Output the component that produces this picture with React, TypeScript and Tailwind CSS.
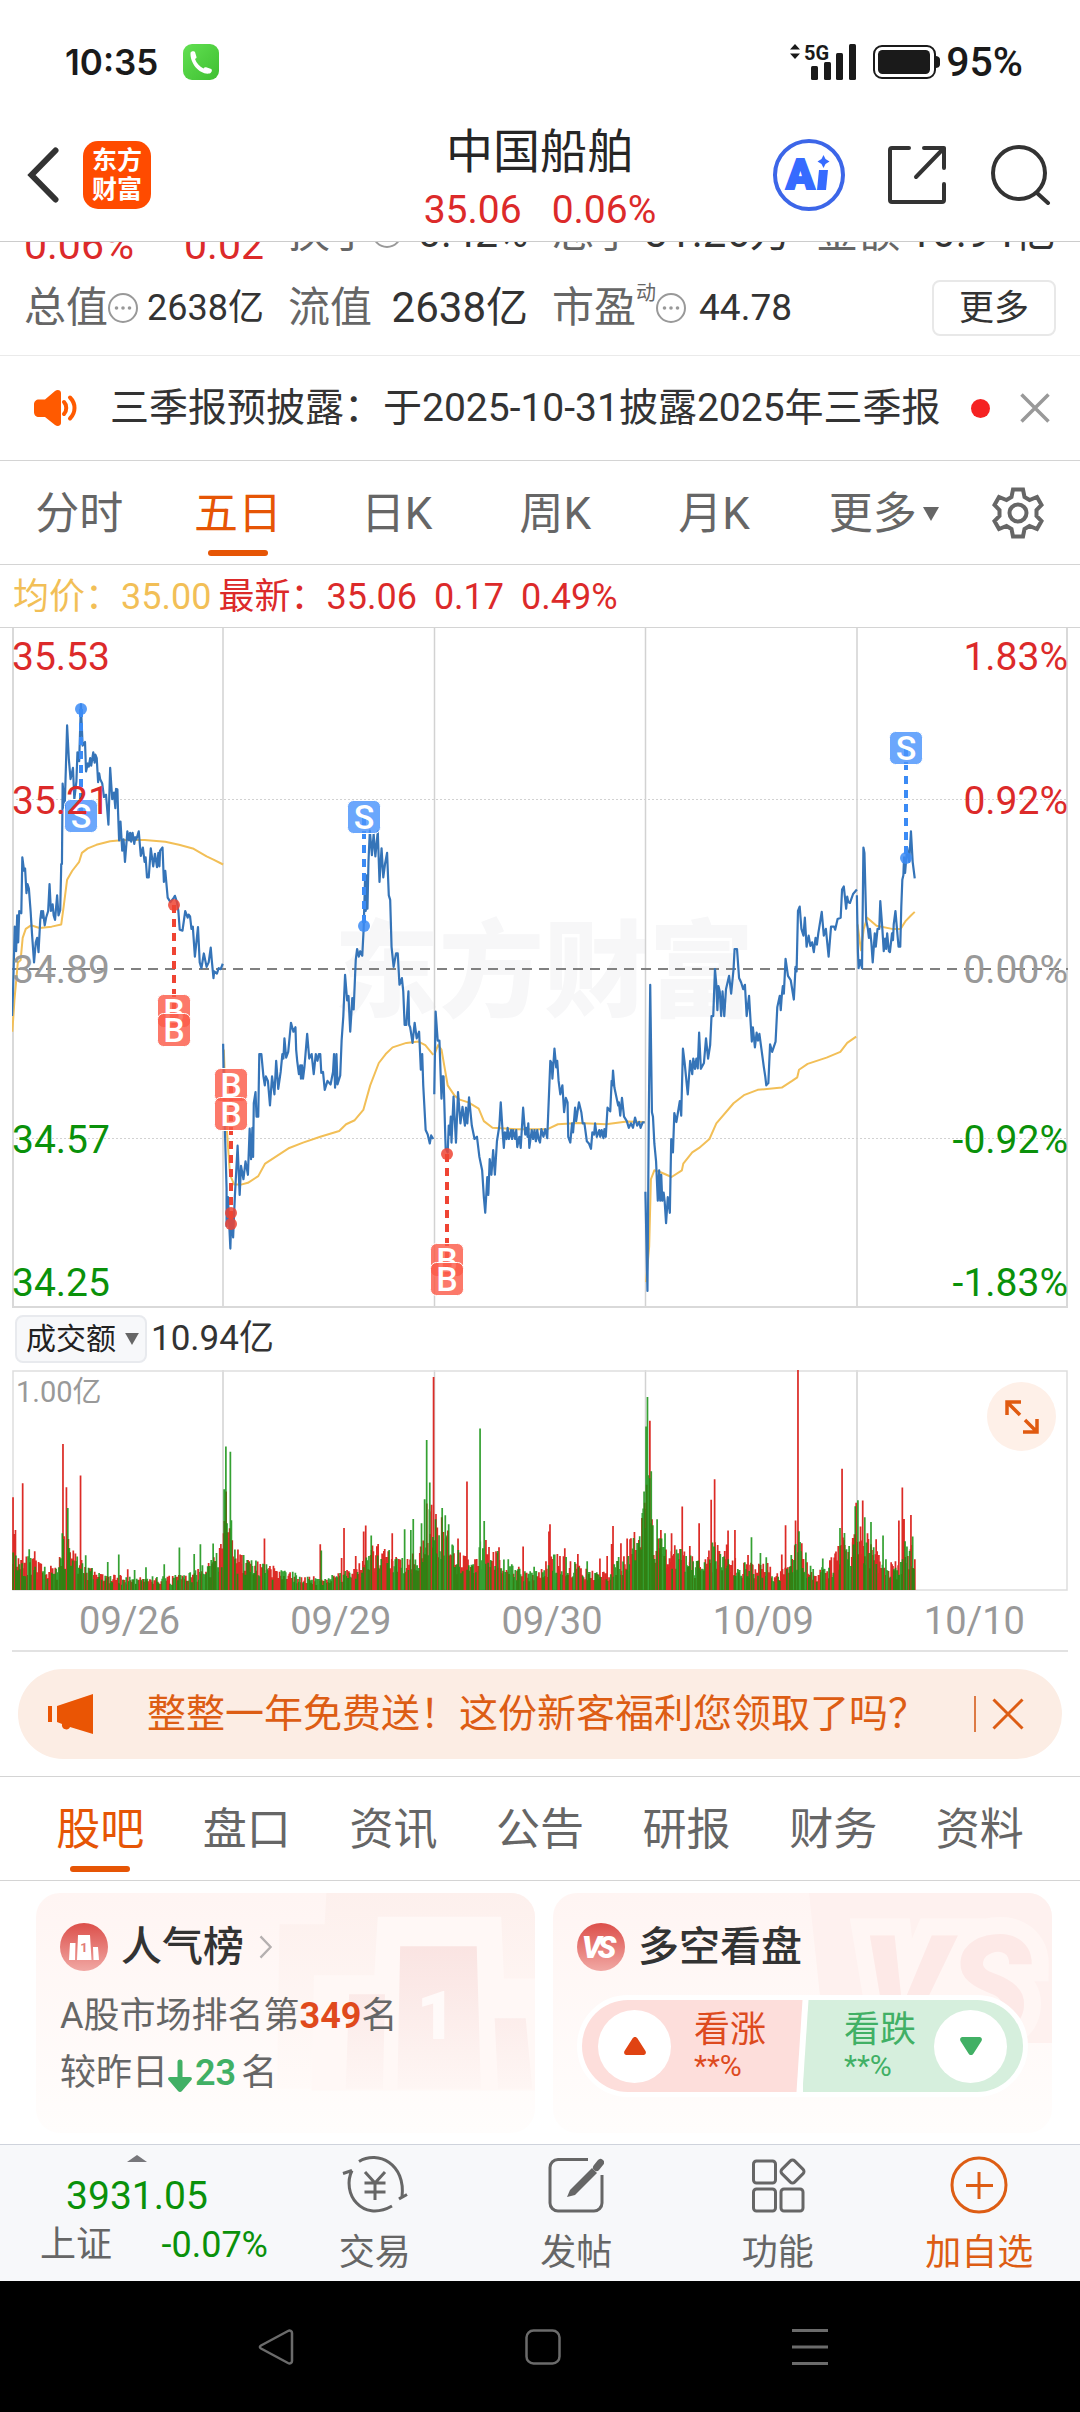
import { useState } from "react";
import { clsx } from "clsx";

const CHART_TABS = ["分时", "五日", "日K", "周K", "月K", "更多"];
const INFO_TABS = ["股吧", "盘口", "资讯", "公告", "研报", "财务", "资料"];
const DATES = ["09/26", "09/29", "09/30", "10/09", "10/10"];

// one line per trading day, plot grid 35..3101 x 17..1538
const PRICE_LINES = [
  "35,885 38,830 43,685 47,740 50,660 53,720 56,650 62,655 65,530 70,560 73,555 77,610 80,590 84,600 89,650 93,700 99,765 104,720 108,710 112,742 117,670 120,650 123,665 125,650 130,682 134,665 140,650 144,590 148,650 153,635 156,660 160,670 166,615 170,660 175,648 178,545 180,545 182,365 188,420 195,235 200,310 205,355 212,330 216,400 222,360 225,295 230,315 235,188 240,280 247,272 250,338 255,320 258,327 262,308 265,325 271,295 275,318 277,300 281,308 285,362 288,342 291,355 297,365 302,395 308,390 315,457 320,330 326,400 331,385 335,420 337,377 341,378 343,430 346,492 350,450 355,515 359,490 363,540 370,472 375,492 378,475 381,495 385,475 390,500 393,485 396,490 403,472 409,527 415,508 420,540 423,530 427,575 432,575 438,510 445,550 450,522 456,552 460,520 463,550 465,515 472,508 476,585 480,560 487,620 495,630 505,620 508,616 514,630 518,650 522,692 530,694 538,650 545,665 548,658 552,662 556,690 560,685 566,752 575,686 580,765 585,778 592,745 600,775 606,765 612,732 615,760 620,800 622,785 630,790 635,778 641,780 647,768",
  "648,947 652,1110 658,1270 658,1355 662,1290 669,1405 672,1330 677,1380 682,1290 690,1175 696,1285 700,1220 707,1250 713,1210 720,1240 725,1137 729,1205 733,1135 735,1200 737,1080 742,1055 745,1110 750,1110 753,970 759,970 765,1020 769,1040 772,1020 778,1030 784,1085 790,1020 797,1060 802,985 808,1048 815,1010 820,970 823,980 826,935 831,978 837,965 845,900 852,920 858,910 860,960 863,985 868,1015 872,995 874,1025 877,995 880,1025 884,1000 892,925 898,980 905,970 911,1015 917,970 922,985 926,970 930,970 933,1012 938,1010 943,1050 951,1030 960,1038 967,1010 970,970 973,1045 977,970 980,1038 988,1018 992,940 997,885 1002,793 1008,850 1012,840 1017,920 1023,845 1027,870 1033,760 1037,735 1042,752 1046,740 1052,750 1056,690 1060,580 1062,650 1065,570 1067,645 1070,540 1074,470 1080,525 1085,478 1090,528 1097,472 1102,585 1108,510 1113,575 1118,545 1124,520 1129,615 1133,625 1137,730 1143,775 1150,745 1155,745 1160,815 1167,800 1171,830 1175,905 1180,905 1186,830 1188,905 1191,910 1198,945 1204,900 1210,935 1217,920 1222,1005 1226,970 1229,1040 1236,1140 1242,1150 1248,1170 1252,1152 1258,1160",
  "1261,1060 1265,875 1271,940 1276,940 1282,1070 1285,1020 1288,1020 1290,1075 1294,1180 1300,1190 1303,1130 1306,1150 1309,1110 1311,1168 1317,1065 1324,1168 1330,1055 1337,1125 1343,1088 1350,1130 1353,1090 1357,1125 1362,1067 1370,1130 1378,1160 1385,1155 1392,1200 1400,1230 1405,1290 1409,1325 1415,1245 1418,1285 1422,1205 1427,1240 1432,1185 1437,1240 1443,1165 1450,1130 1454,1078 1460,1150 1463,1180 1466,1145 1471,1160 1474,1135 1478,1160 1484,1140 1487,1160 1490,1140 1496,1160 1499,1140 1502,1178 1508,1155 1512,1180 1519,1090 1525,1150 1528,1135 1532,1155 1534,1125 1537,1180 1544,1140 1548,1160 1552,1140 1556,1165 1560,1140 1564,1160 1568,1168 1572,1138 1578,1155 1583,1138 1589,1158 1598,985 1602,990 1604,1025 1610,958 1615,1000 1618,985 1622,1030 1627,1060 1633,1040 1638,1100 1643,1068 1648,1078 1650,1155 1656,1168 1661,1125 1664,1145 1670,1090 1673,1120 1681,1078 1688,1100 1692,1125 1697,1125 1704,1165 1710,1170 1716,1182 1720,1145 1725,1150 1728,1125 1733,1155 1740,1140 1743,1155 1747,1140 1752,1158 1755,1138 1759,1155 1764,1090 1772,1098 1776,1030 1778,1040 1780,1007 1784,1045 1795,1085 1797,1078 1801,1108 1806,1068 1812,1110 1820,1120 1826,1135 1832,1125 1838,1135 1844,1112 1850,1130 1856,1122 1860,1135 1866,1123 1872,1123",
  "1874,1278 1880,1500 1884,1100 1888,815 1893,1100 1896,1110 1900,1170 1905,1210 1910,1298 1914,1230 1917,1298 1920,1240 1923,1298 1927,1280 1930,1300 1934,1348 1939,1290 1945,1325 1949,1160 1954,1190 1958,1102 1964,1122 1974,1075 1978,1108 1983,958 1988,990 1997,1060 2004,985 2010,1015 2013,980 2018,1003 2022,980 2026,1002 2030,922 2035,1003 2044,990 2050,935 2056,980 2062,950 2066,885 2071,885 2076,780 2080,815 2083,872 2086,818 2090,830 2094,885 2098,830 2103,885 2108,825 2117,795 2123,835 2130,780 2133,735 2140,735 2146,800 2152,810 2158,825 2163,815 2168,885 2175,840 2180,905 2183,942 2186,910 2192,955 2197,922 2201,940 2205,925 2212,965 2218,1000 2222,1020 2225,1040 2231,1035 2236,948 2242,965 2252,942 2257,865 2264,840 2267,872 2270,840 2273,818 2276,835 2281,757 2288,795 2296,805 2305,848 2310,775 2313,785 2317,650 2322,640 2327,690 2333,705 2337,665 2342,730 2348,705 2353,728 2358,720 2363,742 2368,710 2372,725 2376,700 2386,652 2392,705 2398,690 2406,752 2413,685 2422,685 2425,692 2432,668 2441,665 2445,602 2450,595 2457,645 2460,618 2463,630 2468,632 2477,612 2488,602",
  "2488,615 2491,740 2493,778 2497,760 2503,778 2507,508 2510,520 2515,670 2520,690 2523,710 2526,690 2530,720 2534,765 2540,700 2543,730 2548,690 2553,690 2556,628 2562,690 2566,740 2570,712 2573,735 2576,700 2581,740 2584,742 2590,700 2593,715 2595,680 2600,650 2605,695 2609,730 2614,730 2617,640 2620,580 2623,570 2625,530 2628,565 2634,508 2640,540 2645,472 2650,540 2656,577",
];

const AVERAGE_LINES = [
  "36,920 42,850 52,765 60,760 66,710 75,690 90,682 115,688 150,685 178,680 185,640 195,580 210,560 230,540 238,520 255,510 280,502 320,494 360,491 420,491 480,495 520,502 560,510 600,528 620,535 648,546",
  "650,960 658,1130 668,1240 680,1262 700,1262 720,1258 750,1243 770,1215 800,1200 840,1180 880,1168 930,1155 985,1142 1005,1127 1030,1118 1055,1095 1075,1040 1100,990 1120,970 1140,955 1180,945 1215,942 1235,950 1258,972",
  "1262,970 1272,950 1282,960 1300,1040 1320,1063 1335,1072 1360,1078 1390,1092 1405,1120 1430,1135 1500,1138 1590,1138 1620,1127 1680,1124 1760,1127 1820,1121 1872,1122",
  "1876,1480 1885,1400 1890,1250 1900,1230 1920,1235 1950,1245 1980,1230 1984,1215 2010,1190 2030,1180 2060,1160 2080,1125 2130,1080 2160,1062 2200,1050 2270,1045 2300,1030 2315,1022 2320,1005 2345,992 2400,978 2440,965 2460,945 2486,931",
  "2490,680 2500,738 2508,690 2518,665 2545,683 2590,690 2615,690 2630,672 2645,660 2656,652",
];

interface Trade {
  side: "S" | "B";
  x: number;
  dots: number[];
  badges: number[];
}

const TRADES: Trade[] = [
  { side: "S", x: 69, dots: [81], badges: [188] },
  { side: "S", x: 352, dots: [298], badges: [189] },
  { side: "S", x: 894, dots: [230], badges: [120] },
  { side: "B", x: 162, dots: [277], badges: [383, 402] },
  { side: "B", x: 219, dots: [585, 596], badges: [457, 486] },
  { side: "B", x: 435, dots: [526], badges: [632, 651] },
];

// typical bar height along the time axis
const VOLUME_LEVELS: [number, number][] = [
  [35, 200], [50, 120], [80, 95], [120, 75], [170, 60], [180, 170], [205, 130], [250, 75], [300, 44],
  [400, 38], [500, 40], [560, 50], [620, 90], [645, 140], [650, 300], [672, 220], [690, 110], [740, 85], [800, 65],
  [880, 42], [940, 35], [990, 55], [1040, 70], [1080, 125], [1150, 100], [1215, 120], [1240, 240],
  [1262, 220], [1290, 220], [1320, 125], [1360, 90], [1400, 145], [1460, 95], [1520, 55], [1568, 55],
  [1600, 110], [1660, 85], [1700, 58], [1770, 55], [1820, 125], [1862, 200], [1880, 360], [1895, 230],
  [1930, 120], [1980, 125], [2040, 70], [2075, 145], [2110, 100], [2150, 80], [2230, 75], [2250, 40],
  [2290, 90], [2320, 160], [2340, 90], [2370, 50], [2420, 90], [2450, 150], [2470, 125], [2488, 270],
  [2505, 200], [2525, 140], [2560, 115], [2600, 65], [2625, 95], [2645, 150], [2658, 100],
];

const VOLUME_PEAKS: [number, number, "r" | "g"][] = [
  [38, 278, "r"], [45, 180, "r"], [66, 320, "r"], [85, 122, "g"], [101, 116, "r"], [117, 80, "r"],
  [183, 437, "r"], [193, 308, "r"], [197, 246, "g"], [213, 118, "r"], [234, 343, "r"], [249, 104, "g"],
  [313, 84, "g"], [345, 106, "g"], [371, 62, "r"], [391, 60, "g"], [424, 68, "g"], [477, 77, "g"],
  [521, 127, "g"], [564, 108, "g"], [582, 137, "g"], [619, 139, "g"], [638, 126, "r"], [651, 302, "g"],
  [656, 430, "g"], [669, 414, "g"], [691, 121, "r"], [724, 86, "r"], [768, 154, "r"], [930, 137, "r"],
  [933, 118, "g"], [999, 186, "r"], [992, 96, "r"], [1033, 102, "r"], [1056, 175, "r"], [1062, 193, "r"],
  [1078, 163, "g"], [1098, 138, "r"], [1130, 120, "g"], [1139, 170, "r"], [1175, 182, "g"], [1193, 180, "g"],
  [1200, 213, "g"], [1224, 200, "g"], [1233, 272, "g"], [1239, 449, "g"], [1248, 322, "g"], [1253, 255, "r"],
  [1259, 638, "r"], [1266, 228, "r"], [1284, 246, "g"], [1293, 224, "g"], [1330, 154, "r"], [1356, 325, "r"],
  [1394, 484, "g"], [1406, 207, "g"], [1411, 150, "r"], [1449, 128, "r"], [1519, 130, "r"], [1551, 70, "g"],
  [1594, 175, "r"], [1597, 197, "r"], [1640, 125, "r"], [1678, 108, "r"], [1705, 86, "g"], [1742, 94, "r"],
  [1763, 102, "r"], [1776, 138, "r"], [1780, 192, "r"], [1803, 140, "r"], [1821, 154, "r"], [1864, 216, "r"],
  [1872, 261, "r"], [1876, 490, "g"], [1880, 578, "g"], [1887, 507, "r"], [1891, 356, "g"], [1908, 212, "g"],
  [1919, 180, "r"], [1931, 170, "g"], [1950, 170, "r"], [1981, 250, "r"], [2003, 132, "r"], [2030, 200, "r"],
  [2065, 270, "r"], [2075, 332, "r"], [2110, 136, "r"], [2114, 178, "r"], [2134, 180, "r"], [2172, 105, "r"],
  [2182, 158, "g"], [2208, 111, "g"], [2225, 98, "g"], [2270, 106, "r"], [2281, 194, "r"], [2310, 208, "r"],
  [2317, 660, "r"], [2320, 176, "g"], [2340, 112, "g"], [2389, 94, "g"], [2414, 98, "r"], [2434, 132, "r"],
  [2439, 186, "g"], [2445, 363, "r"], [2452, 171, "g"], [2476, 156, "r"], [2486, 261, "r"], [2491, 254, "g"],
  [2505, 268, "r"], [2511, 218, "g"], [2529, 204, "g"], [2544, 152, "r"], [2564, 163, "g"], [2600, 86, "r"],
  [2610, 208, "r"], [2620, 307, "r"], [2625, 213, "r"], [2628, 146, "g"], [2645, 225, "r"], [2650, 160, "g"],
];

function buildVolumeBars() {
  const paths = { r: "", g: "" };
  let seed = 11;
  const random = () => {
    seed = (seed * 16807) % 2147483647;
    return seed / 2147483647;
  };
  let level = 0;
  for (let x = 36; x < 2658; x += 2.544) {
    while (level < VOLUME_LEVELS.length - 2 && VOLUME_LEVELS[level + 1][0] < x) level++;
    const [x0, h0] = VOLUME_LEVELS[level];
    const [x1, h1] = VOLUME_LEVELS[level + 1];
    const base = h0 + ((h1 - h0) * (x - x0)) / (x1 - x0);
    const height = base * (0.4 + 0.7 * random());
    paths[random() > 0.4 ? "r" : "g"] += `M${x.toFixed(1)} 659V${(659 - height).toFixed(0)}`;
  }
  VOLUME_PEAKS.forEach(([x, h, side]) => {
    paths[side] += `M${x} 659V${659 - h}`;
  });
  return paths;
}

const volumeBars = buildVolumeBars();

function MoreDots() {
  return (
    <svg viewBox="0 0 30 30" className="size-[30px] shrink-0" aria-hidden="true">
      <circle cx="15" cy="15" r="14" fill="none" stroke="#999" strokeWidth="2" />
      <circle cx="8.5" cy="15" r="1.8" fill="#999" />
      <circle cx="15" cy="15" r="1.8" fill="#999" />
      <circle cx="21.5" cy="15" r="1.8" fill="#999" />
    </svg>
  );
}

function StatusBar() {
  return (
    <div className="flex h-[120px] items-center justify-between pt-1 pr-[57px] pl-[65px] text-[#1a1a1a]">
      <div className="flex items-center gap-[25px]">
        <span className="font-['Inter','Roboto',sans-serif] text-[35px] leading-[40px] font-semibold">10:35</span>
        <svg viewBox="0 0 36 36" className="size-9" aria-hidden="true">
          <defs>
            <linearGradient id="call" x1="0" y1="0" x2="1" y2="1">
              <stop offset="0" stopColor="#62e052" />
              <stop offset="1" stopColor="#3fbf31" />
            </linearGradient>
          </defs>
          <rect width="36" height="36" rx="9" fill="url(#call)" />
          <path d="M7.500 9c0-2 4-2.500 4.500-1l1.500 5c.2 1-.5 1.500-1.500 2 1.500 4 4.500 7.500 8.500 9.500.800-1 1.500-1.500 2.700-1.200l5 1.700c1.500 1 .3 4-1.700 4.500C17 31 7 20 7.500 9z" fill="#fff" />
        </svg>
      </div>
      <div className="flex items-center">
        <svg viewBox="0 0 67 38" className="mr-[16px] h-[38px] w-[67px]" aria-hidden="true" fill="#1a1a1a">
          <path d="M0 6.500L5 1l5 5.500zM0 10.500h10L5 16z" />
          <text x="14" y="17" fontSize="20" fontWeight="700">5G</text>
          <rect x="21" y="23" width="7" height="14" rx="1.500" />
          <rect x="34" y="19" width="7" height="18" rx="1.500" />
          <rect x="46" y="10" width="7" height="27" rx="1.500" />
          <rect x="59" y="1" width="7" height="36" rx="1.500" />
        </svg>
        <svg viewBox="0 0 67 34" className="mr-[6px] h-[34px] w-[67px]" aria-hidden="true">
          <rect x="1" y="1" width="61" height="32" rx="8" fill="none" stroke="#1a1a1a" strokeWidth="2" />
          <rect x="5" y="5" width="52" height="24" rx="4.500" fill="#1a1a1a" />
          <path d="M62 11c3 0 5 1 5 4v4c0 3-2 4-5 4z" fill="#1a1a1a" />
        </svg>
        <span className="text-[41px] leading-[44px] font-medium">95%</span>
      </div>
    </div>
  );
}

function Header() {
  return (
    <header className="grid h-[122px] grid-cols-[1fr_auto_1fr] border-b border-[#ccc]">
      <div className="flex items-center gap-6 pb-3 pl-[27px]">
        <button type="button" aria-label="返回">
          <svg viewBox="0 0 32 56" className="h-14 w-8" fill="none" stroke="#333" strokeWidth="6" strokeLinecap="round" strokeLinejoin="miter">
            <path d="M28.500 3.500L4.500 28l24 24.500" />
          </svg>
        </button>
        <a href="#home" className="flex size-[68px] flex-col items-center justify-center rounded-[15px] bg-[#ff4b00] text-[25px] leading-[29px] font-bold text-white">
          <span>东方</span>
          <span>财富</span>
        </a>
      </div>
      <div className="flex flex-col items-center">
        <h1 className="text-[47px] leading-[64px] text-[#262626]">中国船舶</h1>
        <p className="flex gap-[30px] text-[39px] leading-[52px] text-[#dc2a2a]">
          <span>35.06</span>
          <span>0.06%</span>
        </p>
      </div>
      <div className="flex items-center justify-end pr-[29px] pb-3">
        <button type="button" aria-label="AI" className="mr-[41px]">
          <svg viewBox="0 0 74 74" className="size-[74px]">
            <circle cx="37" cy="37" r="34" fill="none" stroke="#3c66e8" strokeWidth="4" />
            <text x="14" y="51" fontSize="42" fontWeight="900" fill="#366bff" stroke="#366bff" strokeWidth="2">A</text>
            <path d="M47 32h9l-2 20h-9z" fill="#366bff" />
            <path d="M51.500 17l2 4 4 2.500-4 2.500-2 4-2-4-4-2.500 4-2.500z" fill="#366bff" />
          </svg>
        </button>
        <button type="button" aria-label="分享" className="mr-[44px]">
          <svg viewBox="0 0 60 60" className="size-[60px]" fill="none" stroke="#333" strokeWidth="4" strokeLinecap="round" strokeLinejoin="round">
            <path d="M22 3H5a2 2 0 0 0-2 2v50a2 2 0 0 0 2 2h50a2 2 0 0 0 2-2V39" />
            <path d="M37 3h20v20M57 3L29 32" />
          </svg>
        </button>
        <button type="button" aria-label="搜索">
          <svg viewBox="0 0 60 60" className="size-[60px]" fill="none" stroke="#333" strokeWidth="4" strokeLinecap="round">
            <circle cx="28" cy="28" r="26" />
            <path d="M46 48l11 10" />
          </svg>
        </button>
      </div>
    </header>
  );
}

function Stats() {
  return (
    <section className="flex h-[114px] flex-col justify-end overflow-hidden border-b border-[#eaeaea] px-6 pb-[17px] text-[#333]">
      <div className="grid shrink-0 grid-cols-4 items-end gap-x-6 text-[42px] leading-[74px] whitespace-nowrap">
        <div className="flex justify-between text-[41px] leading-[66px] text-[#dc2a2a]">
          <span>0.06%</span>
          <span>0.02</span>
        </div>
        <div className="flex items-center justify-between pb-2">
          <span className="flex items-center text-[#666]">换手<MoreDots /></span>
          <span className="text-[41px]">0.42%</span>
        </div>
        <div className="flex justify-between pb-2">
          <span className="text-[#666]">总手</span>
          <span>31.26万</span>
        </div>
        <div className="flex justify-between pb-2">
          <span className="text-[#666]">金额</span>
          <span>10.94亿</span>
        </div>
      </div>
      <div className="grid shrink-0 grid-cols-4 items-center gap-x-6 text-[42px] leading-[60px] whitespace-nowrap">
        <div className="flex items-center justify-between">
          <span className="flex items-center text-[#666]">总值<MoreDots /></span>
          <span className="text-[36px]">2638亿</span>
        </div>
        <div className="flex justify-between">
          <span className="text-[#666]">流值</span>
          <span>2638亿</span>
        </div>
        <div className="flex items-center justify-between">
          <span className="flex items-center text-[#666]">
            市盈<span className="self-start text-[20px] leading-[30px]">动</span><MoreDots />
          </span>
          <span className="text-[37px]">44.78</span>
        </div>
        <div className="flex justify-end">
          <button type="button" className="h-14 w-[124px] rounded-lg border-2 border-[#e8e8e8] text-[35px] leading-none">更多</button>
        </div>
      </div>
    </section>
  );
}

function Notice({ onClose }: { onClose: () => void }) {
  return (
    <div className="flex h-[105px] items-center border-b border-[#d4d4d4] pr-[30px] pl-[34px]">
      <svg viewBox="0 0 44 36" className="h-9 w-11 shrink-0" aria-hidden="true">
        <path d="M5 9.500h6L21 1c3-2 6-.5 6 2v30c0 2.500-3 4-6 2L11 27H5c-3 0-5-2-5-5v-7.500c0-3 2-5 5-5z" fill="#ff5a00" />
        <path d="M30 12c3 3 3 9 0 12M36 7.500c6 6 6 15 0 21" fill="none" stroke="#ff5a00" strokeWidth="4" strokeLinecap="round" />
      </svg>
      <a href="#notice" className="min-w-0 flex-1 overflow-hidden pl-8 text-[39px] leading-[56px] whitespace-nowrap text-[#333]">
        三季报预披露：于2025-10-31披露2025年三季报
      </a>
      <span className="mx-[30px] size-[19px] shrink-0 rounded-full bg-[#f52222]" />
      <button type="button" aria-label="关闭" onClick={onClose}>
        <svg viewBox="0 0 30 30" className="size-[30px]" stroke="#999" strokeWidth="3.500">
          <path d="M1.500 1.500l27 27M28.500 1.500l-27 27" />
        </svg>
      </button>
    </div>
  );
}

interface TabProps {
  label: string;
  active: boolean;
  onSelect: () => void;
}

function Tab({ label, active, onSelect }: TabProps) {
  return (
    <button
      type="button"
      role="tab"
      aria-selected={active}
      onClick={onSelect}
      className={clsx("relative flex h-full flex-1 items-center justify-center pt-[3px] text-[44px] leading-[56px]", active ? "text-[#e65505]" : "text-[#666]")}
    >
      {label}
      {label === "更多" && (
        <svg viewBox="0 0 16 14" className="absolute right-[13px] h-[14px] w-[16px]" fill="#666">
          <path d="M0 0h16L8 14z" />
        </svg>
      )}
      {active && <span className="absolute bottom-2 h-[6px] w-[60px] rounded-full bg-[#e65505]" />}
    </button>
  );
}

function TradeMarker({ side, x, dots, badges }: Trade) {
  const color = side === "S" ? "#3b8bf5" : "#ef4433";
  const from = Math.min(...dots, ...badges);
  const to = Math.max(...dots, ...badges);
  return (
    <g>
      <line x1={x} x2={x} y1={from} y2={to} stroke={color} strokeWidth="4" strokeDasharray="8 6" />
      {dots.map((y) => (
        <circle key={y} cx={x} cy={y} r="6" fill={color} opacity="0.85" />
      ))}
      {badges.map((y) => (
        <g key={y}>
          <rect x={x - 16.5} y={y - 16.5} width="33" height="33" rx="6" fill={side === "S" ? "#4a94fb" : "#fb5c49"} fillOpacity="0.82" stroke="#fff" strokeWidth="1" />
          <text x={x} y={y + 12} textAnchor="middle" fontSize="34" fontWeight="500" fill="#fff">{side}</text>
        </g>
      ))}
    </g>
  );
}

function PriceChart() {
  return (
    <div className="relative mx-3 text-[39px] leading-[40px]">
      <svg viewBox="0 0 1056 680" className="block w-full" role="img" aria-label="五日走势">
        <text x="532" y="380" textAnchor="middle" fontSize="105" fontWeight="900" fill="#f7f7f8">东方财富</text>
        <g stroke="#d2d2d2" strokeWidth="1.500">
          <path d="M211 0V680M422.500 0V680M633.500 0V680M845 0V680" />
          <path d="M0 171.500H1056M0 510.500H1056" strokeWidth="1" strokeDasharray="2 2" />
        </g>
        <path d="M1 0V679H1055V0" fill="none" stroke="#d9d9d9" strokeWidth="2" />
        <path d="M0 341H1056" stroke="#808080" strokeWidth="2" strokeDasharray="10 7" />
        <svg viewBox="35 17 3066 1521" width="1056" height="680" preserveAspectRatio="none" fill="none" strokeLinejoin="round">
          {AVERAGE_LINES.map((points) => (
            <polyline key={points} points={points} stroke="#f2bf57" strokeWidth="2" vectorEffect="non-scaling-stroke" />
          ))}
          {PRICE_LINES.map((points) => (
            <polyline key={points} points={points} stroke="#3574b8" strokeWidth="2.200" vectorEffect="non-scaling-stroke" />
          ))}
        </svg>
        {TRADES.map((trade) => (
          <TradeMarker key={trade.x} {...trade} />
        ))}
      </svg>
      <div className="absolute inset-0 flex justify-between">
        <div className="flex flex-col">
          <span className="pt-[9px] text-[#dc2a2a]">35.53</span>
          <span className="pt-[104px] text-[#dc2a2a]">35.21</span>
          <span className="pt-[129px] text-[#999]">34.89</span>
          <span className="pt-[130px] text-[#0a910a]">34.57</span>
          <span className="pt-[103px] text-[#0a910a]">34.25</span>
        </div>
        <div className="flex flex-col items-end">
          <span className="pt-[9px] text-[#dc2a2a]">1.83%</span>
          <span className="pt-[104px] text-[#dc2a2a]">0.92%</span>
          <span className="pt-[129px] text-[#999]">0.00%</span>
          <span className="pt-[130px] text-[#0a910a]">-0.92%</span>
          <span className="pt-[103px] text-[#0a910a]">-1.83%</span>
        </div>
      </div>
    </div>
  );
}

function VolumeChart() {
  return (
    <section>
      <div className="flex h-[62px] items-center gap-1 pl-[15px] text-[#333]">
        <button type="button" className="flex h-12 w-[132px] items-center justify-center gap-2 rounded-lg border-2 border-[#e8eaee] bg-[#f7f8fa] pl-1 text-[30px] leading-none text-[#222]">
          成交额
          <svg viewBox="0 0 16 14" className="h-3 w-4" fill="#666">
            <path d="M0 0h16L8 14z" />
          </svg>
        </button>
        <span className="text-[35px] leading-[48px]">10.94亿</span>
      </div>
      <div className="relative mx-3">
        <svg viewBox="0 0 1056 221" className="block w-full" role="img" aria-label="成交额">
          <path d="M211 0V220M422.500 0V220M633.500 0V220M845 0V220" stroke="#d2d2d2" strokeWidth="1.500" />
          <path d="M1 1H1055V220H1Z" fill="none" stroke="#dedede" strokeWidth="1.500" />
          <svg viewBox="35 0 3066 659" width="1056" height="220" preserveAspectRatio="none">
            <path d={volumeBars.r} stroke="#dc2b26" strokeWidth="5" />
            <path d={volumeBars.g} stroke="#12900f" strokeWidth="5" strokeOpacity="0.85" />
          </svg>
        </svg>
        <span className="absolute top-0 left-1 text-[29px] leading-[44px] text-[#999]">1.00亿</span>
        <button type="button" aria-label="全屏" className="absolute top-3 right-3 flex size-[69px] items-center justify-center rounded-full bg-[#fef0e8]">
          <svg viewBox="0 0 34 34" className="size-[34px]" fill="none" stroke="#e05a10" strokeWidth="3.500">
            <path d="M2 15V2h14M2 2l13 13M32 19v13H18M32 32L20 20" />
          </svg>
        </button>
      </div>
      <div className="flex h-[59px] items-center pl-6 text-[38px] leading-[56px] text-[#999]">
        {DATES.map((date) => (
          <span key={date} className="flex-1 text-center">{date}</span>
        ))}
      </div>
      <div className="mx-3 h-[2px] bg-[#e2e2e2]" />
    </section>
  );
}

function PromoBanner({ onClose }: { onClose: () => void }) {
  return (
    <div className="mx-[18px] my-[17px] flex h-[90px] items-center rounded-full bg-[#fcede4] pr-[38px] pl-[30px] text-[#dd5d14]">
      <svg viewBox="0 0 45 40" className="h-10 w-[45px] shrink-0" aria-hidden="true" fill="#ea5504">
        <path d="M0 12h4v16H0zM9 12L45 0v40L22 33c-1 4-9 3-8-3l-5-2z" />
      </svg>
      <a href="#promo" className="flex-1 pl-[54px] text-[39px] leading-[56px] whitespace-nowrap">
        整整一年免费送！这份新客福利您领取了吗？
      </a>
      <span className="mr-[16px] h-9 w-[2px] bg-[#dd7a44]" />
      <button type="button" aria-label="关闭" onClick={onClose}>
        <svg viewBox="0 0 32 32" className="size-8" stroke="#dd5d14" strokeWidth="3">
          <path d="M1.500 1.500l29 29M30.500 1.500l-29 29" />
        </svg>
      </button>
    </div>
  );
}

function RankCard() {
  return (
    <article className="relative h-60 overflow-hidden rounded-3xl bg-linear-to-b from-[#fff5f3] to-[#fffdfc] pt-[26px] pl-6">
      <svg viewBox="106 38 1447 707" preserveAspectRatio="none" className="absolute inset-0 size-full" aria-hidden="true">
        <defs>
          <linearGradient id="halo" x1="0" y1="0" x2="0" y2="1">
            <stop offset="0" stopColor="#fdf0ed" />
            <stop offset="1" stopColor="#fffaf8" />
          </linearGradient>
          <linearGradient id="podium" x1="0" y1="0" x2="0" y2="1">
            <stop offset="0" stopColor="#fae4e2" />
            <stop offset="1" stopColor="#fef6f4" />
          </linearGradient>
        </defs>
        <path d="M948 38L943 130H812L805 615H1553V38z" fill="url(#halo)" />
        <path d="M1097 108L1087 280H912L905 620H1553V290H1463L1455 108z" fill="#fff8f6" />
        <path d="M1162 195H1384L1396 615H1154zM1014 336H1118L1112 615H1004zM1436 407H1526L1545 615H1446z" fill="url(#podium)" />
        <text x="1210" y="468" fontSize="195" fontWeight="900" fill="#fffaf9">1</text>
      </svg>
      <div className="relative flex flex-col">
        <h2 className="flex h-14 items-center text-[41px] leading-[56px] font-medium text-[#333]">
          <svg viewBox="0 0 48 48" className="mr-[13px] size-12" aria-hidden="true">
            <defs>
              <linearGradient id="badge" x1="0" y1="0" x2="0" y2="1">
                <stop offset="0" stopColor="#dc4f4a" />
                <stop offset="1" stopColor="#f1a8a4" />
              </linearGradient>
            </defs>
            <circle cx="24" cy="24" r="24" fill="url(#badge)" />
            <path d="M18 12h12l1.500 25H17zM10 20h5.500L15 37H9zM33 24h5l1 13h-5.500z" fill="#fff" />
            <text x="24" y="29" textAnchor="middle" fontSize="13" fontWeight="700" fill="#e27c78">1</text>
          </svg>
          人气榜
          <svg viewBox="0 0 14 26" className="ml-[15px] h-6 w-[14px]" fill="none" stroke="#b5b0b0" strokeWidth="2.500">
            <path d="M1 1.500L12 13 1 24.500" />
          </svg>
        </h2>
        <p className="mt-[13px] text-[36px] leading-[57px] text-[#666]">
          A股市场排名第<b className="text-[#e04a1c]">349</b>名
        </p>
        <p className="flex items-center text-[36px] leading-[57px] text-[#666]">
          较昨日
          <svg viewBox="0 0 24 34" className="mt-1 h-[34px] w-6" fill="#41b065">
            <path d="M9.500 3a2.500 2.500 0 0 1 5 0v15H22c2 0 2.500 2 1 3.500L14 32c-1 1.300-3 1.300-4 0L1 21.500C-.5 20 0 18 2 18h7.500z" />
          </svg>
          <b className="ml-[3px] font-semibold text-[#41b065]">23</b>
          <span className="ml-[5px]">名</span>
        </p>
      </div>
    </article>
  );
}

function VoteCard() {
  return (
    <article className="relative h-60 overflow-hidden rounded-3xl bg-linear-to-b from-[#fff5f3] to-[#fffdfc] pt-[26px] pr-6 pl-6">
      <svg viewBox="0 0 499 240" preserveAspectRatio="none" className="absolute inset-0 size-full" aria-hidden="true">
        <path d="M256 0H499V150H272z" fill="#fef1ef" />
        <text x="308" y="140" fontSize="136" fontWeight="900" fontStyle="italic" fill="#fde9e7" stroke="#fff6f4" strokeWidth="34" paintOrder="stroke">VS</text>
      </svg>
      <div className="relative">
        <h2 className="flex h-14 items-center text-[41px] leading-[56px] font-medium text-[#333]">
          <svg viewBox="0 0 48 48" className="mr-[13px] size-12" aria-hidden="true">
            <circle cx="24" cy="24" r="24" fill="url(#badge)" />
            <text x="22" y="35" textAnchor="middle" fontSize="31" fontWeight="900" fontStyle="italic" fill="#fff">
              <tspan>V</tspan>
              <tspan dx="-4">S</tspan>
            </text>
          </svg>
          多空看盘
        </h2>
        <div className="mt-[20px] flex h-[102px] gap-[6px] overflow-hidden rounded-full border-[5px] border-white bg-white">
          <button type="button" className="relative flex flex-1 items-center bg-[#fddedb] pl-4 text-[#dd4a1e] [clip-path:polygon(0_0,100%_0,calc(100%-6px)_100%,0_100%)]">
            <span className="flex size-[73px] items-center justify-center rounded-full bg-white">
              <svg viewBox="0 0 22 18" className="h-[18px] w-[22px]" fill="#e04312">
                <path d="M8.500 1.500c1.200-2 3.800-2 5 0L21.500 14c1 2 0 4-2 4h-17c-2 0-3-2-2-4z" />
              </svg>
            </span>
            <span className="ml-[23px] flex flex-col text-left text-[36px] leading-[40px]">
              看涨
              <span className="text-[30px] leading-[32px]">**%</span>
            </span>
          </button>
          <button type="button" className="relative -ml-[6px] flex flex-1 items-center justify-end bg-[#d6efdd] pr-4 text-[#41b065] [clip-path:polygon(6px_0,100%_0,100%_100%,0_100%)]">
            <span className="mr-[18px] flex flex-col text-left text-[36px] leading-[40px]">
              看跌
              <span className="text-[30px] leading-[32px]">**%</span>
            </span>
            <span className="flex size-[73px] items-center justify-center rounded-full bg-white">
              <svg viewBox="0 0 22 18" className="h-[18px] w-[22px] rotate-180" fill="#41b065">
                <path d="M8.500 1.500c1.200-2 3.800-2 5 0L21.500 14c1 2 0 4-2 4h-17c-2 0-3-2-2-4z" />
              </svg>
            </span>
          </button>
        </div>
      </div>
    </article>
  );
}

function BottomBar() {
  return (
    <nav className="flex h-[137px] border-t border-[#cfd3dc] bg-[#f7f8fa] text-[36px] leading-[44px] text-[#666]">
      <button type="button" className="flex w-[274px] flex-col items-center pt-[10px] text-[#0a910a]">
        <svg viewBox="0 0 20 7" className="h-[7px] w-5" fill="#77777b">
          <path d="M0 7L10 0l10 7z" />
        </svg>
        <span className="mt-[9px] text-[39px] leading-[50px]">3931.05</span>
        <span className="flex w-full justify-between pr-[6px] pl-[40px] leading-[48px]">
          <span className="text-[#666]">上证</span>
          <span>-0.07%</span>
        </span>
      </button>
      <button type="button" className="flex flex-1 flex-col items-center gap-4 pt-[10px]">
        <svg viewBox="0 0 66 60" className="h-[60px] w-[66px]" fill="none" stroke="#666" strokeWidth="3">
          <path d="M17 6.500C36-5 64 9 60 42M1 18.500l9-3M10 15.500C-1 38 20 68 50 51M57 44l8-4.500M60 42l-3 2" />
          <path d="M23 17l10 11 10-11M33 28v17M22.500 28h21M22.500 37h21" />
        </svg>
        交易
      </button>
      <button type="button" className="flex flex-1 flex-col items-center gap-4 pt-[10px]">
        <svg viewBox="0 0 56 60" className="h-[60px] w-14" fill="none" stroke="#666" strokeWidth="3">
          <path d="M40 4.500H10a8 8 0 0 0-8 8V48a8 8 0 0 0 8 8h36a8 8 0 0 0 8-8V20" />
          <path d="M44 13l5 5-22 22-8 2 3-7z" fill="#666" stroke="none" />
          <path d="M48.500 12.500l4-5" strokeWidth="7" strokeLinecap="round" />
        </svg>
        发帖
      </button>
      <button type="button" className="flex flex-1 flex-col items-center gap-4 pt-[10px]">
        <svg viewBox="0 0 56 60" className="h-[60px] w-14" fill="none" stroke="#666" strokeWidth="3">
          <rect x="3.500" y="6" width="22" height="22" rx="3" />
          <rect x="3.500" y="34" width="22" height="22" rx="3" />
          <rect x="31" y="34" width="22" height="22" rx="3" />
          <rect x="33.500" y="7.500" width="18" height="18" rx="3" transform="rotate(45 42.500 16.500)" />
        </svg>
        功能
      </button>
      <button type="button" className="flex flex-1 flex-col items-center gap-4 pt-[10px] text-[#dd5d14]">
        <svg viewBox="0 0 60 60" className="size-[60px]" fill="none" stroke="#dd5d14" strokeWidth="3">
          <circle cx="30" cy="30" r="27" />
          <path d="M30 17v27M17 30.500h27" />
        </svg>
        加自选
      </button>
    </nav>
  );
}

function SystemNav() {
  return (
    <div className="flex h-[132px] items-center bg-black pr-[137px] pl-[143px]">
      <button type="button" aria-label="后退" className="flex flex-1 justify-center">
        <svg viewBox="0 0 36 36" className="size-9" fill="none" stroke="#6b6b6b" strokeWidth="2.500" strokeLinejoin="round">
          <path d="M3 16.500L30 2c2-1 4 0 4 2v28c0 2-2 3-4 2L3 19.500c-1.500-1-1.500-2 0-3z" />
        </svg>
      </button>
      <button type="button" aria-label="主页" className="flex flex-1 justify-center">
        <svg viewBox="0 0 36 36" className="size-9" fill="none" stroke="#6b6b6b" strokeWidth="2.500">
          <rect x="1.500" y="1.500" width="33" height="33" rx="7" />
        </svg>
      </button>
      <button type="button" aria-label="最近任务" className="flex flex-1 justify-center">
        <svg viewBox="0 0 36 36" className="size-9" stroke="#6b6b6b" strokeWidth="3">
          <path d="M0 1.500h36M0 18h36M0 34.500h36" />
        </svg>
      </button>
    </div>
  );
}

export default function App() {
  const [chartTab, setChartTab] = useState("五日");
  const [infoTab, setInfoTab] = useState("股吧");
  const [showNotice, setShowNotice] = useState(true);
  const [showPromo, setShowPromo] = useState(true);

  return (
    <div className="flex min-h-screen flex-col bg-white font-['Roboto','Noto_Sans_CJK_SC',sans-serif]">
      <StatusBar />
      <Header />
      <main>
        <Stats />
        {showNotice && <Notice onClose={() => setShowNotice(false)} />}
        <div role="tablist" className="flex h-[104px] items-center border-b border-[#d4d4d4] pr-9">
          {CHART_TABS.map((tab) => (
            <Tab key={tab} label={tab} active={tab === chartTab} onSelect={() => setChartTab(tab)} />
          ))}
          <button type="button" aria-label="设置" className="flex w-[92px] justify-end">
            <svg viewBox="0 0 52 52" className="size-[52px]" fill="none" stroke="#666" strokeWidth="4">
              <path d="M21 2.500h10l1.500 7.500 5 3 7.500-3 4.500 8-5 5v6l5 5-4.500 8-7.500-3-5 3L31 49.500H21L19.500 42l-5-3L7 42l-4.500-8 5-5v-6l-5-5L7 10l7.500 3 5-3z" />
              <circle cx="26" cy="26" r="8.500" />
            </svg>
          </button>
        </div>
        <div className="flex h-[63px] items-center border-b border-[#d4d4d4] pt-[2px] pl-[13px] text-[36px] leading-[48px] whitespace-nowrap text-[#dc2a2a]">
          <span className="text-[#f2bf57]">均价：35.00</span>
          <span className="ml-[7px]">最新：35.06</span>
          <span className="ml-[17px]">0.17</span>
          <span className="ml-[17px]">0.49%</span>
        </div>
        <PriceChart />
        <VolumeChart />
        {showPromo && <PromoBanner onClose={() => setShowPromo(false)} />}
        <div role="tablist" className="flex h-[105px] items-center border-y border-[#d4d4d4] px-[27px]">
          {INFO_TABS.map((tab) => (
            <Tab key={tab} label={tab} active={tab === infoTab} onSelect={() => setInfoTab(tab)} />
          ))}
        </div>
        <div className="grid grid-cols-2 gap-[18px] pt-3 pr-7 pb-[11px] pl-9">
          <RankCard />
          <VoteCard />
        </div>
      </main>
      <BottomBar />
      <SystemNav />
    </div>
  );
}
